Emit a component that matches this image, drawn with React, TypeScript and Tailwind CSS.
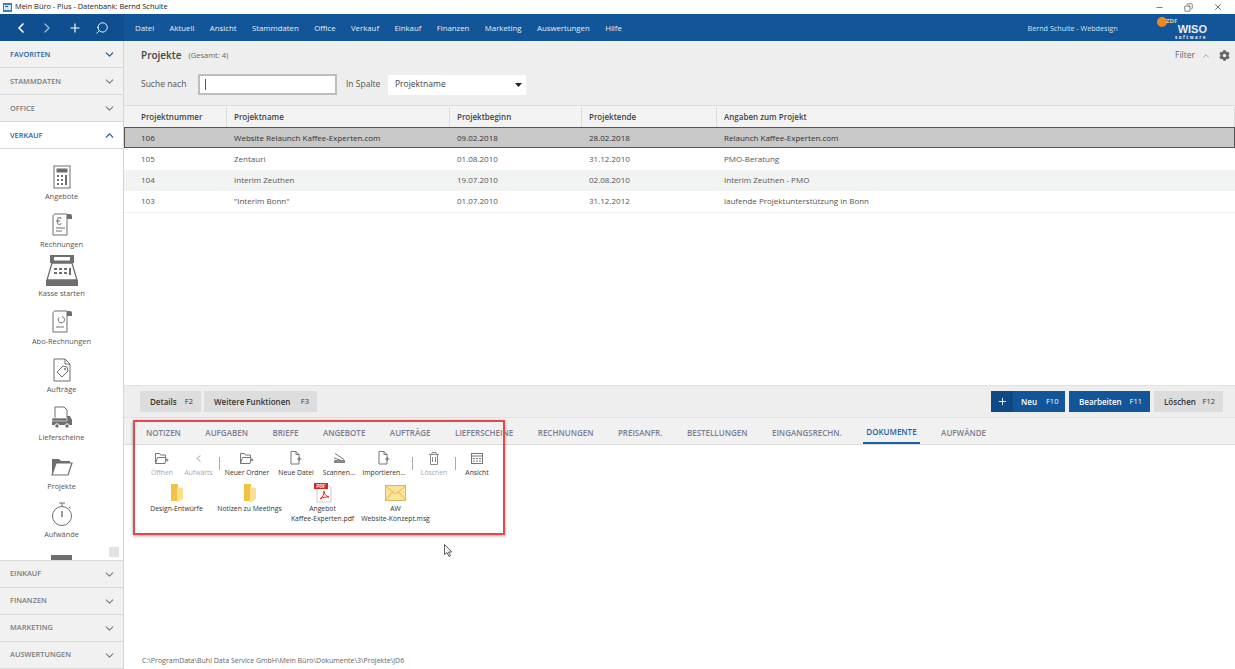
import { ChevronDown, ChevronUp, ChevronLeft, ChevronRight, Plus, Search, Minus, X, Copy } from "lucide-react";
import { FaCog } from "react-icons/fa";
import type { ReactNode } from "react";

const MENU = ["Datei", "Aktuell", "Ansicht", "Stammdaten", "Office", "Verkauf", "Einkauf", "Finanzen", "Marketing", "Auswertungen", "Hilfe"];
const TABS = ["NOTIZEN", "AUFGABEN", "BRIEFE", "ANGEBOTE", "AUFTRÄGE", "LIEFERSCHEINE", "RECHNUNGEN", "PREISANFR.", "BESTELLUNGEN", "EINGANGSRECHN.", "DOKUMENTE", "AUFWÄNDE"];
const COLS = ["w-[103px] pl-[17px]", "w-[223px] pl-[7px]", "w-[132px] pl-[7px]", "w-[135px] pl-[7px]", "flex-1 pl-[7px]"];
const ROWS = [
  ["106", "Website Relaunch Kaffee-Experten.com", "09.02.2018", "28.02.2018", "Relaunch Kaffee-Experten.com"],
  ["105", "Zentauri", "01.08.2010", "31.12.2010", "PMO-Beratung"],
  ["104", "Interim Zeuthen", "19.07.2010", "02.08.2010", "Interim Zeuthen - PMO"],
  ["103", "\"Interim Bonn\"", "01.07.2010", "31.12.2012", "laufende Projektunterstützung in Bonn"],
];

function NavRow({ label, active, open, top }: { label: string; active?: boolean; open?: boolean; top?: boolean }) {
  return (
    <div className={`flex h-[27px] shrink-0 items-center justify-between border-b border-[#d9d9d9] pl-[10px] pr-[7px] text-[7.4px] font-semibold ${top ? "pt-[1px]" : ""} ${open ? "bg-white" : "bg-[#f1f1f1]"} ${active ? "text-[#1d62a8]" : "text-[#7b7b7b]"}`}>
      <span>{label}</span>
      {open ? <ChevronUp size={13} strokeWidth={2.5} /> : <ChevronDown size={13} strokeWidth={active ? 2.5 : 2} />}
    </div>
  );
}

function SideItem({ label, children }: { label: string; children: ReactNode }) {
  return (
    <div className="flex h-[48.25px] shrink-0 flex-col items-center">
      <div className="flex h-[28px] items-center justify-center">{children}</div>
      <span className="h-[12px] text-[7.4px] leading-[10px] text-[#555]">{label}</span>
    </div>
  );
}

const stroke = { fill: "none", stroke: "#6e6e6e", strokeWidth: 1 };

function SideIcons() {
  return (
    <>
      <SideItem label="Angebote">
        <svg width="18" height="24" viewBox="0 0 18 24">
          <rect x="1" y="1" width="16" height="22" {...stroke} />
          <rect x="3.5" y="3.5" width="11" height="4" fill="#6e6e6e" />
          <path d="M4 10h2v2H4zM8 10h2v2H8zM4 14h2v2H4zM8 14h2v2H8zM4 18h2v2H4zM8 18h2v2H8zM12 10h2v10h-2z" fill="#6e6e6e" />
        </svg>
      </SideItem>
      <SideItem label="Rechnungen">
        <svg width="22" height="26" viewBox="0 0 22 26">
          <path d="M2 4.500C2 3 3 2 4 2h12v21H2z" {...stroke} />
          <path d="M16 2h3q2 0 2 2v3h-5z" fill="#6e6e6e" />
          <text x="5" y="13" fontSize="10" fontFamily="Liberation Sans, sans-serif" fill="#6e6e6e">€</text>
          <path d="M5 16h9M5 19h6" {...stroke} />
        </svg>
      </SideItem>
      <SideItem label="Kasse starten">
        <svg width="34" height="33" viewBox="0 0 34 33" className="-mt-[6px]">
          <path d="M5 1h24v8H5z" fill="#6e6e6e" />
          <rect x="9" y="3" width="16" height="3.5" fill="#fff" />
          <path d="M7 9h20l5 17H2z" fill="none" stroke="#6e6e6e" strokeWidth="1.3" />
          <path d="M9 14h3v2H9zM14 14h3v2h-3zM19 14h3v2h-3zM9 18h3v2H9zM14 18h3v2h-3zM19 18h3v2h-3zM24 14h2v7h-2z" fill="#6e6e6e" />
          <rect x="1" y="26" width="32" height="6" fill="#6e6e6e" />
        </svg>
      </SideItem>
      <SideItem label="Abo-Rechnungen">
        <svg width="22" height="26" viewBox="0 0 22 26">
          <path d="M2 4.500C2 3 3 2 4 2h12v21H2z" {...stroke} />
          <path d="M16 2h3q2 0 2 2v3h-5z" fill="#6e6e6e" />
          <path d="M8 8.500a3.200 3.200 0 1 0 3-1" {...stroke} />
          <path d="M5 18h8" {...stroke} />
        </svg>
      </SideItem>
      <SideItem label="Aufträge">
        <svg width="18" height="24" viewBox="0 0 18 24">
          <path d="M1 1h11l5 5v17H1z" {...stroke} />
          <path d="M12 1v5h5" {...stroke} />
          <path d="M4 14l6-6 4 1 1 4-6 6z" {...stroke} />
          <circle cx="12" cy="11" r="1" fill="#6e6e6e" />
        </svg>
      </SideItem>
      <SideItem label="Lieferscheine">
        <svg width="22" height="24" viewBox="0 0 22 24">
          <path d="M4 1h9l3 3v11H4z" {...stroke} />
          <path d="M1 12h15v-2h3l2 4v5H1z" fill="#6e6e6e" />
          <path d="M1 12h15v3H1z" fill="none" stroke="#fff" strokeWidth=".6" />
          <circle cx="6" cy="20" r="2.200" fill="#6e6e6e" stroke="#fff" />
          <circle cx="16" cy="20" r="2.200" fill="#6e6e6e" stroke="#fff" />
        </svg>
      </SideItem>
      <SideItem label="Projekte">
        <svg width="22" height="18" viewBox="0 0 22 18">
          <path d="M1 17V1h7l2 2h9v2H5L1 17z" fill="#6e6e6e" />
          <path d="M1 17L5 5h16l-4 12z" fill="#fff" stroke="#6e6e6e" strokeWidth="1.200" />
        </svg>
      </SideItem>
      <SideItem label="Aufwände">
        <svg width="20" height="25" viewBox="0 0 20 25">
          <circle cx="10" cy="14" r="9.500" {...stroke} />
          <path d="M7 1h6M10 1v3M17 5l1.500 1.500" {...stroke} />
          <path d="M10 9v6" fill="none" stroke="#6e6e6e" strokeWidth="1.400" />
        </svg>
      </SideItem>
      <div className="mt-[6px] flex shrink-0 justify-center">
        <div className="h-[8px] w-[21px] bg-[#6e6e6e]" />
      </div>
    </>
  );
}

const tb = { fill: "none", stroke: "#777", strokeWidth: 1 };

function ToolItem({ label, w, off, children }: { label: string; w: string; off?: boolean; children: ReactNode }) {
  return (
    <div className={`flex shrink-0 flex-col items-center ${w}`}>
      <div className="flex h-[16px] items-center justify-center">{children}</div>
      <span className={`mt-[1px] whitespace-nowrap text-[6.8px] leading-[11px] ${off ? "text-[#aaa]" : "text-[#333]"}`}>{label}</span>
    </div>
  );
}

function Sep() {
  return <div className="mt-[7px] h-[13px] w-px shrink-0 bg-[#aaa]" />;
}

function FolderOut() {
  return (
    <svg width="14" height="11" viewBox="0 0 14 11">
      <path d="M.5 10.500V.5h4l1 1.500h5v2M.5 10.500L2.500 4.500h8.500l-1 6z" {...tb} />
      <path d="M10 7h3.500M12 5.500V8.500" {...tb} />
    </svg>
  );
}

function FilePlus() {
  return (
    <svg width="12" height="14" viewBox="0 0 12 14">
      <path d="M1 .5h5l3 3v9.500H1z" {...tb} />
      <path d="M6 .5v3h3M7 8h4.500M9.500 6v4" {...tb} />
    </svg>
  );
}

function Toolbar() {
  return (
    <div className="flex items-start pl-[22px]">
      <ToolItem label="Öffnen" w="w-[32px]" off><FolderOut /></ToolItem>
      <ToolItem label="Aufwärts" w="w-[41px]" off><ChevronLeft size={11} color="#888" /></ToolItem>
      <Sep />
      <ToolItem label="Neuer Ordner" w="w-[54px]"><FolderOut /></ToolItem>
      <ToolItem label="Neue Datei" w="w-[44px]"><FilePlus /></ToolItem>
      <ToolItem label="Scannen..." w="w-[42px]">
        <svg width="13" height="12" viewBox="0 0 13 12">
          <path d="M1 6l9 3M2 1.500l9 6" {...tb} />
          <path d="M1 8h11v3H1z" fill="#888" />
        </svg>
      </ToolItem>
      <ToolItem label="Importieren..." w="w-[48px]"><FilePlus /></ToolItem>
      <div className="w-[4px] shrink-0" />
      <Sep />
      <ToolItem label="Löschen" w="w-[42px]" off>
        <svg width="10" height="13" viewBox="0 0 10 13">
          <path d="M0 2.500h10M3 2.500V.5h4v2M1.500 2.500V12.500h7V2.500M3.500 5v5M6.500 5v5" fill="none" stroke="#888" />
        </svg>
      </ToolItem>
      <Sep />
      <ToolItem label="Ansicht" w="w-[42px]">
        <svg width="12" height="11" viewBox="0 0 12 11">
          <rect x=".5" y=".5" width="11" height="10" {...tb} />
          <path d="M.5 3h11" {...tb} />
          <path d="M2 5h2v1H2zM5 5h2v1H5zM8 5h2v1H8zM2 7.500h2v1H2zM5 7.500h2v1H5zM8 7.500h2v1H8z" fill="#777" />
        </svg>
      </ToolItem>
    </div>
  );
}

function YellowFolder() {
  return (
    <svg width="14" height="19" viewBox="0 0 14 19">
      <path d="M1 0h7v17H1z" fill="#f0c348" />
      <path d="M7 3l6 1v11l-6 4z" fill="#fbe08f" />
    </svg>
  );
}

function FileItem({ lines, children }: { lines: string[]; children: ReactNode }) {
  return (
    <div className="flex w-[73px] shrink-0 flex-col items-center">
      <div className="flex h-[20px] items-center justify-center">{children}</div>
      <div className="mt-[1px] whitespace-nowrap text-center text-[6.8px] leading-[9.5px] text-[#333]">
        {lines.map((l) => <div key={l}>{l}</div>)}
      </div>
    </div>
  );
}

export default function App() {
  return (
    <div className="relative flex h-[669px] w-[1235px] flex-col overflow-hidden bg-white text-[#444] [font-family:'Open_Sans','Noto_Sans',sans-serif]">
      {/* title bar */}
      <div className="flex h-[14px] shrink-0 items-center justify-between bg-white pl-[3px] pr-[12px]">
        <div className="flex items-center gap-[3px]">
          <svg width="9" height="9" viewBox="0 0 9 9">
            <rect width="9" height="9" fill="#3d7eb5" />
            <rect x="1" y="2" width="7" height="5" fill="#d7e6f2" />
            <rect x="2" y="3" width="3" height="1" fill="#1d5c94" />
          </svg>
          <span className="text-[7.4px] leading-none text-[#222]">Mein Büro - Plus - Datenbank: Bernd Schulte</span>
        </div>
        <div className="flex items-center gap-[20px] text-[#222]">
          <Minus size={9} strokeWidth={1.5} />
          <Copy size={9} strokeWidth={1.5} className="-scale-x-100" />
          <X size={10} strokeWidth={1.5} />
        </div>
      </div>

      {/* top bar */}
      <div className="flex h-[27px] shrink-0 bg-[#125599] text-white">
        <div className="flex w-[124px] shrink-0 items-center bg-[#0f4f90] pl-[13px] pt-[1px] text-white">
          <ChevronLeft size={16} strokeWidth={2.5} />
          <ChevronRight size={16} strokeWidth={2} className="ml-[10px] opacity-60" />
          <Plus size={14} strokeWidth={2} className="ml-[13px]" />
          <Search size={14} strokeWidth={1.6} className="ml-[13px] -scale-x-100" />
        </div>
        <div className="flex flex-1 items-center gap-[15.4px] pl-[11px] text-[7.8px] text-[#e6eef6]">
          {MENU.map((m) => <span key={m} className="pt-[3px]">{m}</span>)}
          <span className="ml-auto mr-[24px] pt-[1px] text-[7.2px] font-medium text-[#d6e3f0]">Bernd Schulte - Webdesign</span>
          <div className="relative mr-[28px] flex h-[27px] w-[50px] flex-col items-end justify-center">
            <div className="absolute left-0 top-[3px] h-[10px] w-[10px] rounded-full bg-[#ee8a1d]" />
            <span className="absolute left-[9px] top-[4px] text-[6px] font-bold leading-[7px] text-[#f7c99a]">ZDF</span>
            <span className="mt-[8px] text-[11px] font-extrabold leading-[10px] [font-family:'Liberation_Sans',sans-serif]">WISO</span>
            <span className="mt-[1px] text-[4.5px] font-bold leading-[5px] tracking-[1.5px]">software</span>
          </div>
        </div>
      </div>

      <div className="flex min-h-0 flex-1">
        {/* sidebar */}
        <aside className="flex w-[124px] shrink-0 flex-col border-r border-[#d5d5d5] bg-white">
          <NavRow label="FAVORITEN" active top />
          <NavRow label="STAMMDATEN" top />
          <NavRow label="OFFICE" top />
          <NavRow label="VERKAUF" active open top />
          <div className="relative flex min-h-0 flex-1 flex-col overflow-hidden pt-[14px]">
            <SideIcons />
            <div className="absolute bottom-[3px] right-[4px] h-[10px] w-[10px] bg-[#e3e3e3]" />
          </div>
          <div className="border-t border-[#d9d9d9]">
            <NavRow label="EINKAUF" />
            <NavRow label="FINANZEN" />
            <NavRow label="MARKETING" />
            <NavRow label="AUSWERTUNGEN" />
          </div>
        </aside>

        {/* main */}
        <main className="flex min-w-0 flex-1 flex-col bg-white">
          <div className="h-[64px] shrink-0 bg-[#eeeeee] pl-[17px] pr-[5px]">
            <div className="flex h-[29px] items-center">
              <span className="text-[10px] font-semibold text-[#444]">Projekte</span>
              <span className="ml-[7px] text-[7.5px] text-[#666]">(Gesamt: 4)</span>
              <span className="ml-auto text-[8.5px] text-[#666]">Filter</span>
              <ChevronUp size={10} className="ml-[6px] text-[#999]" />
              <FaCog size={11} className="ml-[8px] text-[#666]" />
            </div>
            <div className="mt-[4px] flex items-center">
              <span className="w-[57px] text-[8.5px] text-[#555]">Suche nach</span>
              <div className="flex h-[21px] w-[139px] items-center border-2 border-[#bdbdbd] bg-white pl-[5px]">
                <div className="h-[11px] w-px bg-[#555]" />
              </div>
              <span className="ml-[9px] w-[42px] text-[8.5px] text-[#555]">In Spalte</span>
              <div className="flex h-[20px] w-[138px] items-center justify-between bg-white pl-[7px] pr-[4px] text-[8.5px] text-[#444]">
                Projektname
                <svg width="7" height="4" viewBox="0 0 7 4"><path d="M0 0h7L3.500 4z" fill="#222" /></svg>
              </div>
            </div>
          </div>

          {/* table */}
          <div className="flex h-[22px] shrink-0 items-center border-t border-[#dedede] bg-[#f3f3f3] pt-[1px] text-[8px] font-semibold text-[#444]">
            {COLS.map((c, i) => (
              <div key={c} className={`flex h-full items-center border-r border-[#dcdcdc] ${c}`}>
                {["Projektnummer", "Projektname", "Projektbeginn", "Projektende", "Angaben zum Projekt"][i]}
              </div>
            ))}
          </div>
          {ROWS.map((row, r) => (
            <div
              key={row[0]}
              className={`flex h-[21.25px] shrink-0 items-center text-[8px] ${r === 0 ? "bg-[#c8c8c8] pt-[1px] text-[#333] shadow-[inset_0_0_0_1px_#555]" : r === 2 ? "bg-[#f2f3f3] text-[#555]" : "bg-white text-[#555]"}`}
            >
              {row.map((cell, i) => <div key={i} className={COLS[i]}>{cell}</div>)}
            </div>
          ))}
          <div className="h-[173px] shrink-0 border-t border-[#f0f0f0]" />

          {/* action bar */}
          <div className="flex h-[33px] shrink-0 items-center gap-[3px] border-y border-[#e2e2e2] bg-[#eeeeee] pl-[16px] pr-[12px] text-[8px]">
            <div className="flex h-[21px] w-[61px] items-center justify-between bg-[#dddddd] pl-[10px] pr-[8px] text-[#333]">
              <span className="font-semibold">Details</span><span className="text-[7.5px]">F2</span>
            </div>
            <div className="flex h-[21px] w-[113px] items-center justify-between bg-[#dddddd] pl-[10px] pr-[8px] text-[#333]">
              <span className="font-semibold">Weitere Funktionen</span><span className="text-[7.5px]">F3</span>
            </div>
            <div className="ml-auto flex h-[21px] w-[74px] items-center bg-[#125599] text-white">
              <div className="flex h-full w-[22px] items-center justify-center bg-[#0d4984]"><Plus size={11} strokeWidth={2} /></div>
              <span className="ml-[8px] font-semibold">Neu</span><span className="ml-[9px] text-[7.5px]">F10</span>
            </div>
            <div className="ml-[1px] flex h-[21px] w-[81px] items-center justify-between bg-[#125599] pl-[10px] pr-[8px] text-white">
              <span className="font-semibold">Bearbeiten</span><span className="text-[7.5px]">F11</span>
            </div>
            <div className="ml-[1px] flex h-[21px] w-[69px] items-center justify-between bg-[#dddddd] pl-[10px] pr-[8px] text-[#333]">
              <span className="font-semibold">Löschen</span><span className="text-[7.5px]">F12</span>
            </div>
          </div>

          {/* tabs */}
          <div className="flex h-[27px] shrink-0 items-stretch gap-[24.5px] border-b border-[#dcdcdc] bg-[#f1f1f1] pl-[22px] text-[8px] font-semibold text-[#7a7c94]">
            {TABS.map((t) => (
              <div key={t} className={`flex items-center pt-[4px] ${t === "DOKUMENTE" ? "mx-[-3px] border-b-2 border-[#1d62a8] px-[3px] text-[#1d62a8]" : ""}`}>{t}</div>
            ))}
          </div>

          {/* documents */}
          <div className="flex min-h-0 flex-1 flex-col pt-[5px]">
            <Toolbar />
            <div className="mt-[5px] flex pl-[16px]">
              <FileItem lines={["Design-Entwürfe"]}><YellowFolder /></FileItem>
              <FileItem lines={["Notizen zu Meetings"]}><YellowFolder /></FileItem>
              <FileItem lines={["Angebot", "Kaffee-Experten.pdf"]}>
                <svg width="18" height="20" viewBox="0 0 18 20">
                  <path d="M3 1h10l4 4v14H3z" fill="#fff" stroke="#ccc" />
                  <rect x="0" y="0" width="14" height="6" fill="#d7281f" />
                  <text x="2.500" y="4.800" fontSize="4.500" fontWeight="700" fill="#fff" fontFamily="Liberation Sans, sans-serif">PDF</text>
                  <path d="M6 16c3-2 4-5 4-8 0 3 2 5 5 6-3 0-6 0-9 2z" fill="none" stroke="#d7281f" />
                </svg>
              </FileItem>
              <FileItem lines={["AW", "Website-Konzept.msg"]}>
                <svg width="21" height="16" viewBox="0 0 21 16">
                  <rect x=".5" y=".5" width="20" height="15" fill="#fae39b" stroke="#d9b65c" />
                  <path d="M.5 1l10 8 10-8M.5 15l7-8M20.500 15l-7-8" fill="none" stroke="#e6b84d" />
                </svg>
              </FileItem>
            </div>
            <div className="mt-auto pb-[3px] pl-[18px] text-[7px] leading-[10px] text-[#666]">
              C:\ProgramData\Buhl Data Service GmbH\Mein Büro\Dokumente\3\Projekte\JD6
            </div>
          </div>
        </main>
      </div>

      {/* annotation and pointer on top of the shot */}
      <div className="absolute left-[133px] top-[420px] h-[115px] w-[372px] border-2 border-[#e2484f] shadow-[0_1px_3px_rgba(0,0,0,0.35)]" />
      <svg className="absolute left-[444px] top-[544px]" width="9" height="13" viewBox="0 0 9 13">
        <path d="M.5.5v10l2.500-2 2 4 1.500-.8-2-3.700h3.300z" fill="#fff" stroke="#333" strokeWidth=".8" />
      </svg>
    </div>
  );
}
